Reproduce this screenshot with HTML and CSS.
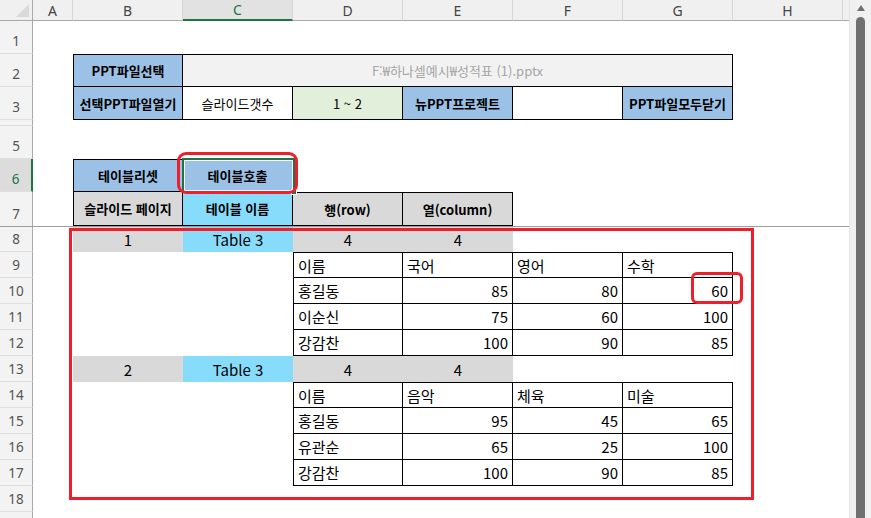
FILE: index.html
```html
<!DOCTYPE html>
<html lang="ko">
<head>
    <meta charset="UTF-8">
    <link rel="stylesheet" href="styles.css">
</head>
<body>
<div class="window">
    <div class="sheet">
        <div class="row hdr">
            <div class="corner"><span class="corner-tri"></span></div>
            <div class="ch colA">A</div>
            <div class="ch">B</div>
            <div class="ch sel">C</div>
            <div class="ch">D</div>
            <div class="ch">E</div>
            <div class="ch">F</div>
            <div class="ch">G</div>
            <div class="ch">H</div>
            <div class="ch tail"></div>
        </div>

        <div class="row"><div class="rh">1</div></div>

        <div class="row">
            <div class="rh">2</div>
            <div class="c colA"></div>
            <div class="c lbl blue bx bt bl">PPT파일선택</div>
            <div class="c span5 path bx bt">F:₩하나셀예시₩성적표 (1).pptx</div>
        </div>

        <div class="row">
            <div class="rh">3</div>
            <div class="c colA"></div>
            <div class="c lbl blue bx bl">선택PPT파일열기</div>
            <div class="c sm bx">슬라이드갯수</div>
            <div class="c sm green bx">1 ~ 2</div>
            <div class="c lbl blue bx">뉴PPT프로젝트</div>
            <div class="c bx"></div>
            <div class="c lbl blue bx">PPT파일모두닫기</div>
        </div>

        <div class="row hidden"><div class="rh"></div></div>

        <div class="row"><div class="rh">5</div></div>

        <div class="row">
            <div class="rh sel">6</div>
            <div class="c colA"></div>
            <div class="c lbl blue bx bt bl">테이블리셋</div>
            <div class="c lbl blue bx bt">테이블호출</div>
        </div>

        <div class="row freeze">
            <div class="rh">7</div>
            <div class="c colA"></div>
            <div class="c lbl gray bx bl">슬라이드 페이지</div>
            <div class="c lbl cyan bx">테이블 이름</div>
            <div class="c lbl gray bx bt">행(row)</div>
            <div class="c lbl gray bx bt">열(column)</div>
        </div>

        <div class="row r25">
            <div class="rh">8</div>
            <div class="c colA"></div>
            <div class="c gray">1</div>
            <div class="c cyan">Table 3</div>
            <div class="c gray">4</div>
            <div class="c gray">4</div>
        </div>

        <div class="row r26">
            <div class="rh">9</div>
            <div class="c colA"></div>
            <div class="c"></div>
            <div class="c"></div>
            <div class="c l bx bt bl">이름</div>
            <div class="c l bx bt">국어</div>
            <div class="c l bx bt">영어</div>
            <div class="c l bx bt">수학</div>
        </div>
        <div class="row r26">
            <div class="rh">10</div>
            <div class="c colA"></div>
            <div class="c"></div>
            <div class="c"></div>
            <div class="c l bx bl">홍길동</div>
            <div class="c r bx">85</div>
            <div class="c r bx">80</div>
            <div class="c r bx">60</div>
        </div>
        <div class="row r26">
            <div class="rh">11</div>
            <div class="c colA"></div>
            <div class="c"></div>
            <div class="c"></div>
            <div class="c l bx bl">이순신</div>
            <div class="c r bx">75</div>
            <div class="c r bx">60</div>
            <div class="c r bx">100</div>
        </div>
        <div class="row r26">
            <div class="rh">12</div>
            <div class="c colA"></div>
            <div class="c"></div>
            <div class="c"></div>
            <div class="c l bx bl">강감찬</div>
            <div class="c r bx">100</div>
            <div class="c r bx">90</div>
            <div class="c r bx">85</div>
        </div>

        <div class="row r26">
            <div class="rh">13</div>
            <div class="c colA"></div>
            <div class="c gray">2</div>
            <div class="c cyan">Table 3</div>
            <div class="c gray">4</div>
            <div class="c gray">4</div>
        </div>

        <div class="row r26">
            <div class="rh">14</div>
            <div class="c colA"></div>
            <div class="c"></div>
            <div class="c"></div>
            <div class="c l bx bt bl">이름</div>
            <div class="c l bx bt">음악</div>
            <div class="c l bx bt">체육</div>
            <div class="c l bx bt">미술</div>
        </div>
        <div class="row r26">
            <div class="rh">15</div>
            <div class="c colA"></div>
            <div class="c"></div>
            <div class="c"></div>
            <div class="c l bx bl">홍길동</div>
            <div class="c r bx">95</div>
            <div class="c r bx">45</div>
            <div class="c r bx">65</div>
        </div>
        <div class="row r26">
            <div class="rh">16</div>
            <div class="c colA"></div>
            <div class="c"></div>
            <div class="c"></div>
            <div class="c l bx bl">유관순</div>
            <div class="c r bx">65</div>
            <div class="c r bx">25</div>
            <div class="c r bx">100</div>
        </div>
        <div class="row r26">
            <div class="rh">17</div>
            <div class="c colA"></div>
            <div class="c"></div>
            <div class="c"></div>
            <div class="c l bx bl">강감찬</div>
            <div class="c r bx">100</div>
            <div class="c r bx">90</div>
            <div class="c r bx">85</div>
        </div>

        <div class="row r26"><div class="rh">18</div></div>
        <div class="row r26"><div class="rh"></div></div>

        <!-- overlays -->
        <div class="sel-box"><span class="sel-handle"></span></div>
        <div class="mark mark-call"></div>
        <div class="mark mark-area"></div>
        <div class="mark mark-cell"></div>
    </div>

    <div class="vscroll">
        <div class="vscroll-up"></div>
        <div class="vscroll-thumb"></div>
    </div>
</div>
</body>
</html>
```

FILE: styles.css
```css
* {
    box-sizing: border-box;
}

body {
    margin: 0;
    background-color: #ffffff;
    font-family: "Noto Sans CJK KR", "Noto Sans", sans-serif;
}

.window {
    display: flex;
    width: 871px;
    height: 518px;
    overflow: hidden;
}

.sheet {
    position: relative;
    width: 849px;
    flex: none;
}

/* rows */
.row {
    display: flex;
    height: 33px;
}

.row.hdr {
    height: 21px;
    background-color: #f0f0f0;
}

.row.hidden {
    height: 6px;
}

.row.freeze {
    height: 35px;
    border-bottom: 1px solid #9e9e9e;
}

.row.r25 {
    height: 25px;
}

.row.r26 {
    height: 26px;
}

/* headers */
.corner {
    width: 33px;
    flex: none;
    display: flex;
    align-items: flex-end;
    justify-content: flex-end;
    padding: 0 3px 3px 0;
    border-right: 1px solid #a9a9a9;
    border-bottom: 1px solid #a9a9a9;
}

.corner-tri {
    width: 0;
    height: 0;
    border-left: 13px solid transparent;
    border-bottom: 13px solid #dadada;
}

.ch {
    width: 110px;
    flex: none;
    display: flex;
    align-items: center;
    justify-content: center;
    font-family: "Noto Sans", sans-serif;
    font-size: 14px;
    color: #444444;
    border-right: 1px solid #d6d6d6;
    border-bottom: 1px solid #a9a9a9;
}

.ch.colA {
    width: 40px;
}

.ch.sel {
    color: #217346;
    background-color: #e2e2e2;
    border-bottom: 2px solid #217346;
}

.ch.tail {
    width: 6px;
    border-right: none;
}

.rh {
    width: 33px;
    flex: none;
    display: flex;
    align-items: flex-end;
    justify-content: center;
    padding-bottom: 3px;
    font-family: "Noto Sans", sans-serif;
    font-size: 13.5px;
    color: #555555;
    background-color: #f3f3f3;
    border-right: 1px solid #a9a9a9;
    border-bottom: 1px solid #dedede;
}

.row.freeze .rh {
    border-bottom: none;
}

.rh.sel {
    color: #217346;
    background-color: #dcdcdc;
    border-right: 2px solid #217346;
}

/* cells */
.c {
    width: 110px;
    flex: none;
    display: flex;
    align-items: center;
    justify-content: center;
    font-size: 15px;
    color: #000000;
    white-space: nowrap;
}

.c.colA {
    width: 40px;
}

.c.span5 {
    width: 550px;
}

.lbl {
    font-size: 13px;
    font-weight: bold;
}

.sm {
    font-size: 13px;
}

.l {
    justify-content: flex-start;
    padding-left: 4px;
}

.r {
    justify-content: flex-end;
    padding-right: 4px;
}

.bx {
    border-right: 1px solid #000000;
    border-bottom: 1px solid #000000;
}

.bt {
    border-top: 1px solid #000000;
}

.bl {
    border-left: 1px solid #000000;
}

.blue {
    background-color: #9bc2e6;
}

.green {
    background-color: #e2efda;
}

.gray {
    background-color: #d9d9d9;
}

.cyan {
    background-color: #87dcfc;
}

.path {
    background-color: #f2f2f2;
    color: #a6a6a6;
    font-size: 13px;
}

/* selection + marks drawn over the grid */
.sel-box {
    position: absolute;
    left: 182px;
    top: 158px;
    width: 113px;
    height: 35px;
    border: 2px solid #217346;
    box-shadow: inset 0 0 0 1px #ffffff;
}

.sel-handle {
    position: absolute;
    right: -4px;
    bottom: -4px;
    width: 6px;
    height: 6px;
    background-color: #217346;
    border: 1px solid #ffffff;
}

.mark {
    position: absolute;
    border: 3px solid #ee1f2b;
}

.mark-call {
    left: 177px;
    top: 152px;
    width: 121px;
    height: 42px;
    border-radius: 9px;
}

.mark-area {
    left: 69px;
    top: 228px;
    width: 685px;
    height: 272px;
}

.mark-cell {
    left: 691px;
    top: 272px;
    width: 52px;
    height: 32px;
    border-radius: 6px;
}

/* scroll bar */
.vscroll {
    width: 22px;
    flex: none;
    display: flex;
    flex-direction: column;
    align-items: center;
    background-color: #f1f1f1;
    border-left: 1px solid #e4e4e4;
}

.vscroll-up {
    margin-top: 5px;
    width: 0;
    height: 0;
    border-left: 4px solid transparent;
    border-right: 4px solid transparent;
    border-bottom: 6px solid #707070;
}

.vscroll-thumb {
    flex: 1;
    width: 9px;
    margin-top: 6px;
    background-color: #707070;
    border-radius: 5px 5px 0 0;
}
```
